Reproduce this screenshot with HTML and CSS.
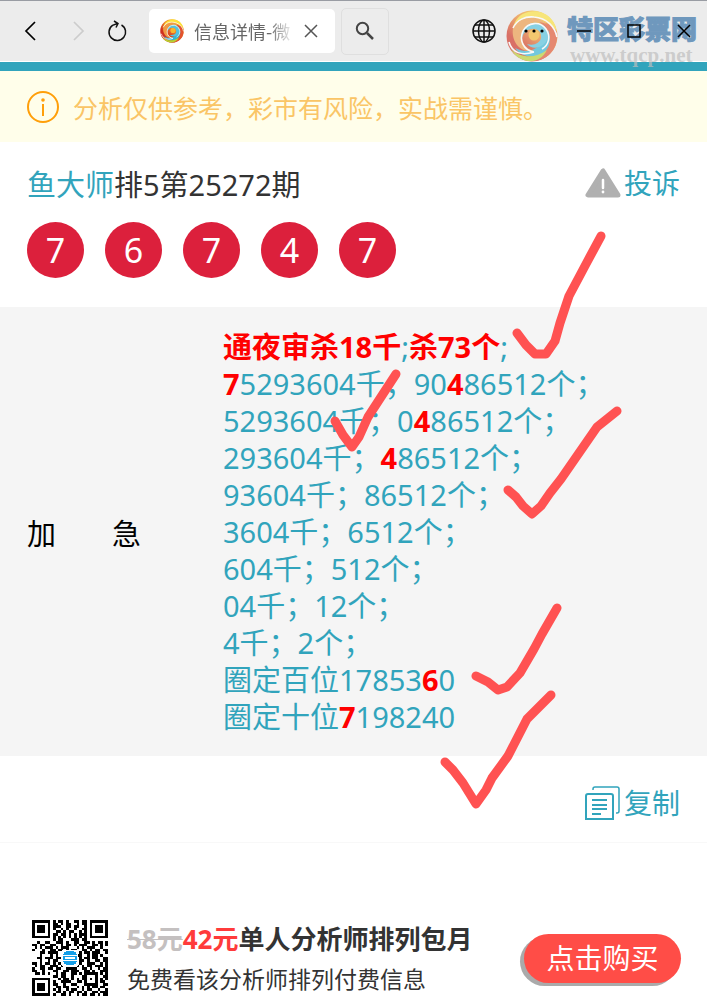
FILE: index.html
```
<!DOCTYPE html>
<html lang="zh-CN">
<head>
    <meta charset="UTF-8">
    <meta name="viewport" content="width=device-width, initial-scale=1.0">
    <title>信息详情</title>
    <link rel="stylesheet" href="styles.css">
</head>
<body>
    <div class="page">
        <header class="browser-bar">
            <nav class="nav-buttons">
                <button class="icon-btn back" aria-label="后退">
                    <svg width="12" height="22" viewBox="0 0 12 22"><path d="M11 2L2 11l9 9" fill="none" stroke="#000" stroke-width="1.700"/></svg>
                </button>
                <button class="icon-btn" aria-label="前进" disabled>
                    <svg width="12" height="22" viewBox="0 0 12 22"><path d="M1 2l9 9-9 9" fill="none" stroke="#ccc" stroke-width="1.700"/></svg>
                </button>
                <button class="icon-btn" aria-label="刷新">
                    <svg width="22" height="22" viewBox="0 0 22 22"><path d="M15.500 5A8.300 8.300 0 1 1 6.500 5.400L11.500 3.500M8 1l4 2.500L10 7.500" fill="none" stroke="#111" stroke-width="1.500"/></svg>
                </button>
            </nav>
            <div class="tab">
                <svg class="favicon" width="24" height="24" viewBox="0 0 52 52"><use href="#swirl"/></svg>
                <span class="tab-title">信息详情-微</span>
                <button class="tab-close" aria-label="关闭标签">
                    <svg width="14" height="14" viewBox="0 0 14 14"><path d="M1 1l12 12M13 1L1 13" stroke="#555" stroke-width="1.500"/></svg>
                </button>
            </div>
            <button class="search-btn" aria-label="搜索">
                <svg width="20" height="20" viewBox="0 0 20 20"><circle cx="7.500" cy="7.500" r="5.700" fill="none" stroke="#444" stroke-width="2"/><path d="M12 12l6 6" stroke="#444" stroke-width="2.500"/></svg>
            </button>
            <div class="watermark">
                <svg class="watermark-logo" width="52" height="52" viewBox="0 0 52 52">
                    <defs>
                        <linearGradient id="warm" x1="0.800" y1="0" x2="0.100" y2="0.800">
                            <stop offset="0" stop-color="#fbd52e"/>
                            <stop offset="0.450" stop-color="#ee8a2c"/>
                            <stop offset="0.800" stop-color="#cf2f20"/>
                        </linearGradient>
                    </defs>
                    <g id="swirl">
                        <circle cx="26" cy="26" r="25.500" fill="url(#warm)"/>
                        <path d="M22 2C37-2 52 9 51 27 48 15 39 7 27 7 18 7 11 11 7 18 9 9 14 4 22 2z" fill="#fde23c"/>
                        <path d="M51 22C53 38 42 50 28 51c10-4 16-13 14-25-1-7-4-11-9-14 8 0 15 4 18 10z" fill="#e2532f"/>
                        <path d="M42 20c5 12 0 23-11 26-9 2-17-1-22-8 8 4 15 4 21 0 7-4 11-11 12-18z" fill="#32b5d6"/>
                        <path d="M5 39c9 9 24 10 36 1C37 48 30 52 22 51 14 50 8 45 5 39z" fill="#b9d32f"/>
                        <path d="M7 18C14 7 31 3 41 15 31 8 17 13 16 25c-1 8 4 14 12 16C14 43 5 32 7 18z" fill="#ef9a45"/>
                        <path d="M16 28c-1-10 7-17 16-15 10 2 13 13 7 20-5 6-14 6-18 1 7 2 13-1 14-6 1-6-4-10-9-9-5 0-9 4-10 9z" fill="#52c3df"/>
                        <path d="M3 32C6 43 16 46 28 42M7 18C11 10 19 6 28 7c13 1 21 10 23 20M28 42C17 40 13 30 17 21c5-9 17-10 23-2 5 7 3 16-4 20" fill="none" stroke="#fff" stroke-width="1.600"/>
                        <circle cx="28" cy="25" r="5.500" fill="#f8b62d"/>
                    </g>
                </svg>
                <div class="watermark-text">
                    <strong>特区彩票网</strong>
                    <span>www.tqcp.net</span>
                </div>
            </div>
            <div class="window-buttons">
                <button class="win-btn" aria-label="语言">
                    <svg width="24" height="24" viewBox="0 0 24 24" fill="none" stroke="#111" stroke-width="1.500"><circle cx="12" cy="12" r="11"/><ellipse cx="12" cy="12" rx="5.500" ry="11"/><path d="M12 1v22M1 12h22M3 6h18M3 18h18"/></svg>
                </button>
                <button class="win-btn" aria-label="更多">
                    <svg width="22" height="6" viewBox="0 0 22 6"><circle cx="3" cy="3" r="1.600"/><circle cx="11" cy="3" r="1.600"/><circle cx="19" cy="3" r="1.600"/></svg>
                </button>
                <button class="win-btn" aria-label="最小化">
                    <svg width="14" height="14" viewBox="0 0 14 14"><path d="M0 7h14" stroke="#000" stroke-width="1.500"/></svg>
                </button>
                <button class="win-btn" aria-label="最大化">
                    <svg width="14" height="14" viewBox="0 0 14 14"><path d="M1 1h12v12H1z" fill="none" stroke="#000" stroke-width="1.500"/></svg>
                </button>
                <button class="win-btn" aria-label="关闭">
                    <svg width="14" height="14" viewBox="0 0 14 14"><path d="M1 1l12 12M13 1L1 13" stroke="#000" stroke-width="1.500"/></svg>
                </button>
            </div>
        </header>

        <main>
            <div class="notice">
                <svg width="32" height="32" viewBox="0 0 32 32"><circle cx="16" cy="16" r="15" fill="none" stroke="#ff9f0a" stroke-width="2"/><circle cx="16" cy="9" r="1.800" fill="#ff9f0a"/><path d="M16 13v12" stroke="#ff9f0a" stroke-width="2"/></svg>
                <span>分析仅供参考，彩市有风险，实战需谨慎。</span>
            </div>

            <section class="issue">
                <div class="issue-head">
                    <h1><a href="#">鱼大师</a>排5第25272期</h1>
                    <a class="action" href="#">
                        <svg width="36" height="30" viewBox="0 0 36 30"><path d="M18 3L3 27h30z" fill="#b0b0b0" stroke="#b0b0b0" stroke-width="5" stroke-linejoin="round"/><path d="M18 12v8" stroke="#fff" stroke-width="2.500" stroke-linecap="round"/><circle cx="18" cy="24" r="1.400" fill="#fff"/></svg>
                        投诉
                    </a>
                </div>
                <ul class="balls">
                    <li>7</li>
                    <li>6</li>
                    <li>7</li>
                    <li>4</li>
                    <li>7</li>
                </ul>
            </section>

            <section class="analysis">
                <h2><span>加</span><span>急</span></h2>
                <div class="picks">
                    <p><b>通夜审杀18千</b>;<b>杀73个</b>;</p>
                    <p><b>7</b>5293604千；90<b>4</b>86512个；</p>
                    <p>5293604千；0<b>4</b>86512个；</p>
                    <p>293604千；<b>4</b>86512个；</p>
                    <p>93604千；86512个；</p>
                    <p>3604千；6512个；</p>
                    <p>604千；512个；</p>
                    <p>04千；12个；</p>
                    <p>4千；2个；</p>
                    <p>圈定百位17853<b>6</b>0</p>
                    <p>圈定十位<b>7</b>198240</p>
                </div>
            </section>

            <div class="copy-row">
                <button class="action">
                    <svg width="36" height="34" viewBox="0 0 36 34" fill="none" stroke="#31a4bc" stroke-width="2"><path d="M8 4V3q0-2 2-2h22q2 0 2 2v22q0 2-2 2h-1" stroke-width="1.500"/><path d="M1 33V10q0-2 2-2h23q2 0 2 2v23z"/><path d="M7 14h15M7 19h15M7 23h15M7 28h9"/></svg>
                    复制
                </button>
            </div>
        </main>

        <footer class="offer">
            <svg id="qr" class="qr" width="76" height="76" viewBox="0 0 29 29" shape-rendering="crispEdges" role="img" aria-label="二维码"></svg>
            <div class="offer-text">
                <p class="price"><del>58元</del><em>42元</em>单人分析师排列包月</p>
                <p class="detail">免费看该分析师排列付费信息</p>
            </div>
            <button class="buy">点击购买</button>
        </footer>

        <svg class="marks" width="707" height="1008" viewBox="0 0 707 1008" aria-hidden="true">
            <path d="M517 333l9 12 9 9 11 0 9-13 5-18 9-27 17-32 15-28"/>
            <path d="M335 421l8 14 9 12 7-10 9-20 13-20 15-23"/>
            <path d="M508 490l8 7 7 9 9 8 9-8 9-13 11-14 36-52 20-16"/>
            <path d="M476 676l12 6 10 8 9-3 13-14 14-24 8-15 15-26"/>
            <path d="M445 762l8 8 10 13 13 21 10-14 6-12 16-22 19-37 24-24"/>
        </svg>
    </div>

    <script src="qr.js"></script>
</body>
</html>
```
FILE: styles.css
```
* {
    box-sizing: border-box;
}
body {
    margin: 0;
    background: #fff;
    color: #333;
    font-family: "Noto Sans", "Noto Sans CJK SC", sans-serif;
}
h1, h2, p, ul {
    margin: 0;
    padding: 0;
    font-weight: normal;
}
a {
    color: #31a4bc;
    text-decoration: none;
}
button {
    border: 0;
    padding: 0;
    background: none;
    font-family: inherit;
}
svg {
    flex: none;
}
.page {
    position: relative;
    min-height: 100vh;
    overflow: hidden;
}

/* browser bar */
.browser-bar {
    position: relative;
    display: flex;
    align-items: center;
    height: 62px;
    border-top: 1px solid #999ca3;
    border-bottom: 1px solid #fff;
    background: #ececec;
}
.nav-buttons {
    display: flex;
    gap: 2px;
    padding: 0 14px 0 12px;
}
.icon-btn {
    display: flex;
    align-items: center;
    justify-content: center;
    width: 36px;
    height: 36px;
}
.back {
    margin-right: 11px;
}
.tab {
    display: flex;
    align-items: center;
    width: 186px;
    height: 44px;
    padding: 0 17px 0 11px;
    border-radius: 5px;
    background: #fff;
}
.tab-title {
    flex: 1;
    margin-left: 10px;
    overflow: hidden;
    white-space: nowrap;
    font-family: "Noto Sans CJK SC", sans-serif;
    font-size: 18px;
    color: #666;
    -webkit-mask-image: linear-gradient(to right, #000 75px, transparent 100px);
    mask-image: linear-gradient(to right, #000 75px, transparent 100px);
}
.tab-close {
    display: flex;
}
.search-btn {
    display: flex;
    align-items: center;
    justify-content: center;
    width: 48px;
    height: 47px;
    margin-left: 6px;
    border: 1px solid #dfdfdf;
    border-radius: 5px;
}
.window-buttons {
    position: relative;
    display: flex;
    margin-left: auto;
    margin-right: -2px;
}
.win-btn {
    display: flex;
    align-items: center;
    justify-content: center;
    width: 50px;
    height: 60px;
}
.watermark {
    position: absolute;
    top: 9px;
    right: 10px;
    display: flex;
    gap: 9px;
    pointer-events: none;
}
.watermark-logo {
    opacity: 0.65;
}
.watermark-text {
    display: flex;
    flex-direction: column;
    color: #6f98bd;
}
.watermark-text strong {
    font-size: 26px;
    font-weight: 900;
    line-height: 38px;
    -webkit-text-stroke: 1px #6f98bd;
}
.watermark-text span {
    padding-left: 3px;
    font-family: "Liberation Serif", serif;
    font-size: 21px;
    font-weight: bold;
    line-height: 14px;
    color: rgba(190, 190, 190, 0.7);
}

/* notice */
.notice {
    display: flex;
    align-items: center;
    gap: 14px;
    height: 80px;
    padding: 0 27px;
    border-top: 9px solid #31a4bc;
    background: #fffeea;
    font-size: 25px;
    color: #fac566;
}

/* issue and winning numbers */
.issue {
    padding: 20px 27px 29px;
}
.issue-head {
    display: flex;
    align-items: center;
    justify-content: space-between;
    height: 42px;
}
.issue-head h1 {
    font-size: 29px;
}
.action {
    display: flex;
    align-items: center;
    gap: 3px;
    font-size: 28px;
    line-height: 40px;
    color: #31a4bc;
}
.balls {
    display: flex;
    gap: 21px;
    margin-top: 18px;
    list-style: none;
}
.balls li {
    width: 57px;
    height: 56px;
    border-radius: 50%;
    background: #dc203c;
    color: #fff;
    font-size: 34px;
    line-height: 56px;
    text-align: center;
}

/* analysis */
.analysis {
    display: grid;
    grid-template-columns: 196px 1fr;
    align-items: center;
    padding: 21px 27px;
    background: #f5f5f5;
}
.analysis h2 {
    display: flex;
    gap: 56px;
    font-size: 29px;
    color: #000;
}
.picks {
    font-size: 29px;
    line-height: 37px;
    color: #31a4bc;
}
.picks b {
    color: #f00;
}
.copy-row {
    display: flex;
    justify-content: flex-end;
    padding: 27px 27px 19px;
    border-bottom: 1px solid #f8f8f8;
}

/* offer */
.offer {
    display: flex;
    align-items: center;
    padding: 74px 26px 9px 32px;
}
.offer-text {
    margin: 2px 0 0 19px;
    white-space: nowrap;
}
.price {
    font-size: 26px;
    font-weight: bold;
    line-height: 40px;
}
.price del {
    color: #c4c0c0;
    text-decoration-thickness: 1px;
}
.price em {
    font-style: normal;
    color: #ff3b3b;
}
.detail {
    font-size: 23px;
    line-height: 40px;
}
.buy {
    width: 157px;
    height: 49px;
    margin-left: auto;
    border-radius: 25px;
    background: #ff4d47;
    box-shadow: -4px 3px 0 #aaa;
    color: #fff;
    font-size: 28px;
    line-height: 49px;
}

/* hand-drawn ticks over the page */
.marks {
    position: absolute;
    top: 0;
    left: 0;
    fill: none;
    stroke: #ff5252;
    stroke-width: 9;
    stroke-linecap: round;
    stroke-linejoin: round;
    pointer-events: none;
}
```
FILE: qr.js
```
// one character per module, # is dark
const rows = [
    '#######.#.##.#..##.##.#######',
    '#.....#.##.#.##..#.##.#.....#',
    '#.###.#.###..##.##..#.#.###.#',
    '#.###.#.#..#.#..#..##.#.###.#',
    '#.###.#..##.#.##..#.#.#.###.#',
    '#.....#.##.##.#.#.###.#.....#',
    '#######.#.#.#.#.#.#.#.#######',
    '........#.##...###.##........',
    '..#..##..###.#..##..##.#.##.#',
    '##.##..##..#.##.#.###..##.#.#',
    '.#.#.###.#.###...#.#.###..#..',
    '#...#..##.##.#.##..##.#.##.##',
    '...##.####......#.#.##.###..#',
    '...#...#.#.......##..#.##.#..',
    '..##.###.##.......#.##.##..##',
    '...#..#.##......#.##.#..##.##',
    '##.#.##.#.#.......#..###..#.#',
    '.#.##..###.#.....#.#.##.###.#',
    '#..##.##.##..####..##.#..#.##',
    '##..#...##..##.###..##.#..###',
    '.##.#.#..#.##..##.#.#####.#.#',
    '........##.##..#...##...#..##',
    '#######...#.##.#.#.##.#.#.#.#',
    '#.....#.#..####..##.#...#.##.',
    '#.###.#.##..#..##...#####..##',
    '#.###.#..##.##...#.#.#.##.##.',
    '#.###.#.#.#..#.##..#.##..#..#',
    '#.....#..##.#.##.##.#..##.###',
    '#######.#..##.#..#.##.##.#.##'
];

const add = (tag, attrs) => {
    const el = document.createElementNS('http://www.w3.org/2000/svg', tag);
    Object.keys(attrs).forEach(key => el.setAttribute(key, attrs[key]));
    document.getElementById('qr').appendChild(el);
};

let d = '';
rows.forEach((row, y) => {
    [...row].forEach((cell, x) => {
        if (cell === '#') d += `M${x} ${y}h1v1h-1z`;
    });
});
add('path', { d: d });

// centre badge
add('rect', { x: 11.5, y: 11.5, width: 6, height: 6, fill: '#fff' });
add('rect', { x: 12, y: 12, width: 5, height: 5, rx: 1, fill: '#159fe8' });
add('path', { d: 'M12 13.700h5M12.500 14.500h4M12 15.300h5', stroke: '#fff', 'stroke-width': 0.4 });
```
